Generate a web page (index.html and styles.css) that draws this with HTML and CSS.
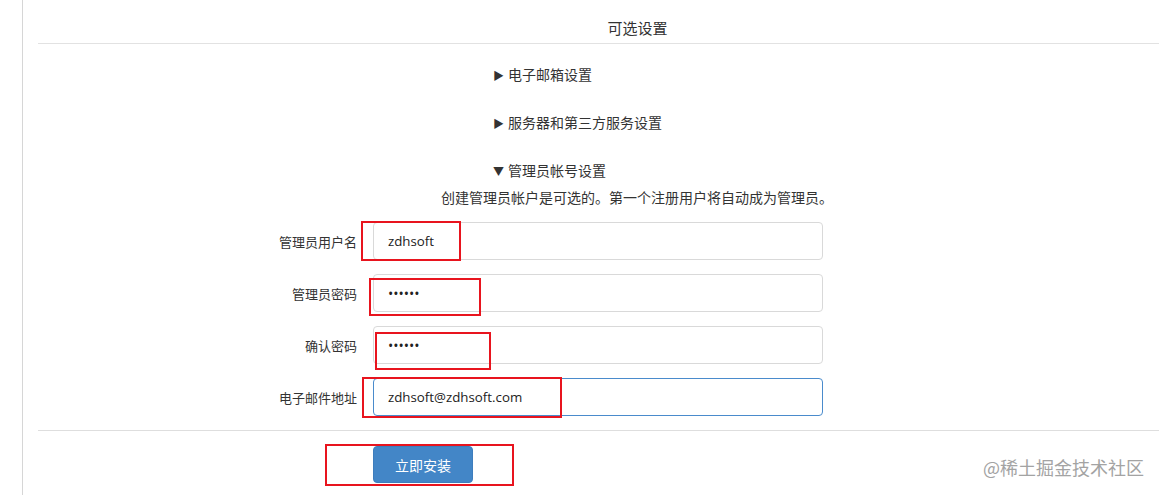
FILE: index.html
```html
<!DOCTYPE html>
<html>
<head>
	<meta charset="utf-8">
	<title>安装</title>
	<link rel="stylesheet" href="styles.css">
</head>
<body>
	<div class="page">
		<div class="panel">
			<div class="title">可选设置</div>

			<div class="options">
				<details class="group">
					<summary>电子邮箱设置</summary>
				</details>
				<details class="group">
					<summary>服务器和第三方服务设置</summary>
				</details>
				<details class="group" open>
					<summary>管理员帐号设置</summary>
				</details>
			</div>

			<p class="hint">创建管理员帐户是可选的。第一个注册用户将自动成为管理员。</p>

			<form class="admin-form">
				<div class="row">
					<label class="label" for="adminName">管理员用户名</label>
					<div class="field">
						<input class="input" type="text" id="adminName" value="zdhsoft">
						<span class="mark mark-1"></span>
					</div>
				</div>
				<div class="row">
					<label class="label" for="adminPass">管理员密码</label>
					<div class="field">
						<input class="input" type="password" id="adminPass" value="123456">
						<span class="mark mark-2"></span>
					</div>
				</div>
				<div class="row">
					<label class="label" for="adminPass2">确认密码</label>
					<div class="field">
						<input class="input" type="password" id="adminPass2" value="123456">
						<span class="mark mark-3"></span>
					</div>
				</div>
				<div class="row">
					<label class="label" for="adminMail">电子邮件地址</label>
					<div class="field">
						<input class="input input-focus" type="text" id="adminMail" value="zdhsoft@zdhsoft.com">
						<span class="mark mark-4"></span>
					</div>
				</div>

				<div class="actions">
					<div class="field">
						<button class="btn" type="button">立即安装</button>
						<span class="mark mark-5"></span>
					</div>
				</div>
			</form>
		</div>
		<div class="watermark">@稀土掘金技术社区</div>
	</div>
</body>
</html>
```

FILE: styles.css
```css
html, body {
	height: 100%;
}
body {
	margin: 0;
	font-family: "Noto Sans CJK SC", "Open Sans", sans-serif;
	font-size: 14px;
	color: #333;
	background: #fff;
	overflow: hidden;
}
.page {
	position: relative;
	height: 100%;
	margin-left: 22px;
	border-left: 1px solid #d6d6d6;
}
.panel {
	margin-left: 15px;
}
.title {
	height: 30px;
	padding-top: 13px;
	padding-left: 78px;
	font-size: 15px;
	line-height: 22px;
	border-bottom: 1px solid #e2e2e2;
	display: flex;
	align-items: center;
	justify-content: center;
}
.options {
	padding-left: 455px;
	padding-top: 20px;
	display: flex;
	flex-direction: column;
	gap: 28px;
}
.group summary {
	line-height: 20px;
	height: 20px;
	cursor: pointer;
	list-style: none;
}
.group summary::before {
	content: "\25B6";
	display: inline-block;
	width: 15px;
	font-size: 11px;
}
.group[open] summary::before {
	content: "\25BC";
}
.hint {
	margin: 7px 0 0 403px;
	line-height: 20px;
}
.admin-form {
	margin-top: 15px;
}
.row {
	display: flex;
	align-items: center;
	margin-bottom: 14px;
}
.label {
	box-sizing: border-box;
	width: 335px;
	padding-right: 16px;
	text-align: right;
	font-size: 13px;
}
.field {
	position: relative;
}
.input {
	box-sizing: border-box;
	width: 450px;
	height: 38px;
	padding: 0 14px;
	border: 1px solid #d9d9d9;
	border-radius: 4px;
	font-family: "Open Sans", "Noto Sans", sans-serif;
	font-size: 13.3px;
	color: #222;
	outline: none;
}
.input[type="password"] {
	font-size: 14px;
}
.input-focus {
	border-color: #4a8bcc;
}
.actions {
	display: flex;
	padding-left: 335px;
	padding-top: 15px;
	border-top: 1px solid #dedede;
}
.btn {
	width: 100px;
	height: 37px;
	border: 1px solid #3d7dbd;
	border-radius: 4px;
	background: #4386c7;
	color: #fff;
	font-family: "Noto Sans CJK SC", sans-serif;
	font-size: 14px;
}
.mark {
	position: absolute;
	border: 2px solid #e8141e;
	box-sizing: border-box;
	pointer-events: none;
}
.mark-1 { left: -12px; top: -1px; width: 100px; height: 40px; }
.mark-2 { left: -4px; top: 4px; width: 112px; height: 38px; }
.mark-3 { left: 2px; top: 6px; width: 116px; height: 38px; }
.mark-4 { left: -11px; top: -1px; width: 200px; height: 41px; }
.mark-5 { left: -48px; top: -2px; width: 189px; height: 42px; }
.watermark {
	position: absolute;
	right: 15px;
	top: 454px;
	font-size: 18px;
	color: #a3a3a3;
	text-shadow: 0 0 1px #fff;
}
```
